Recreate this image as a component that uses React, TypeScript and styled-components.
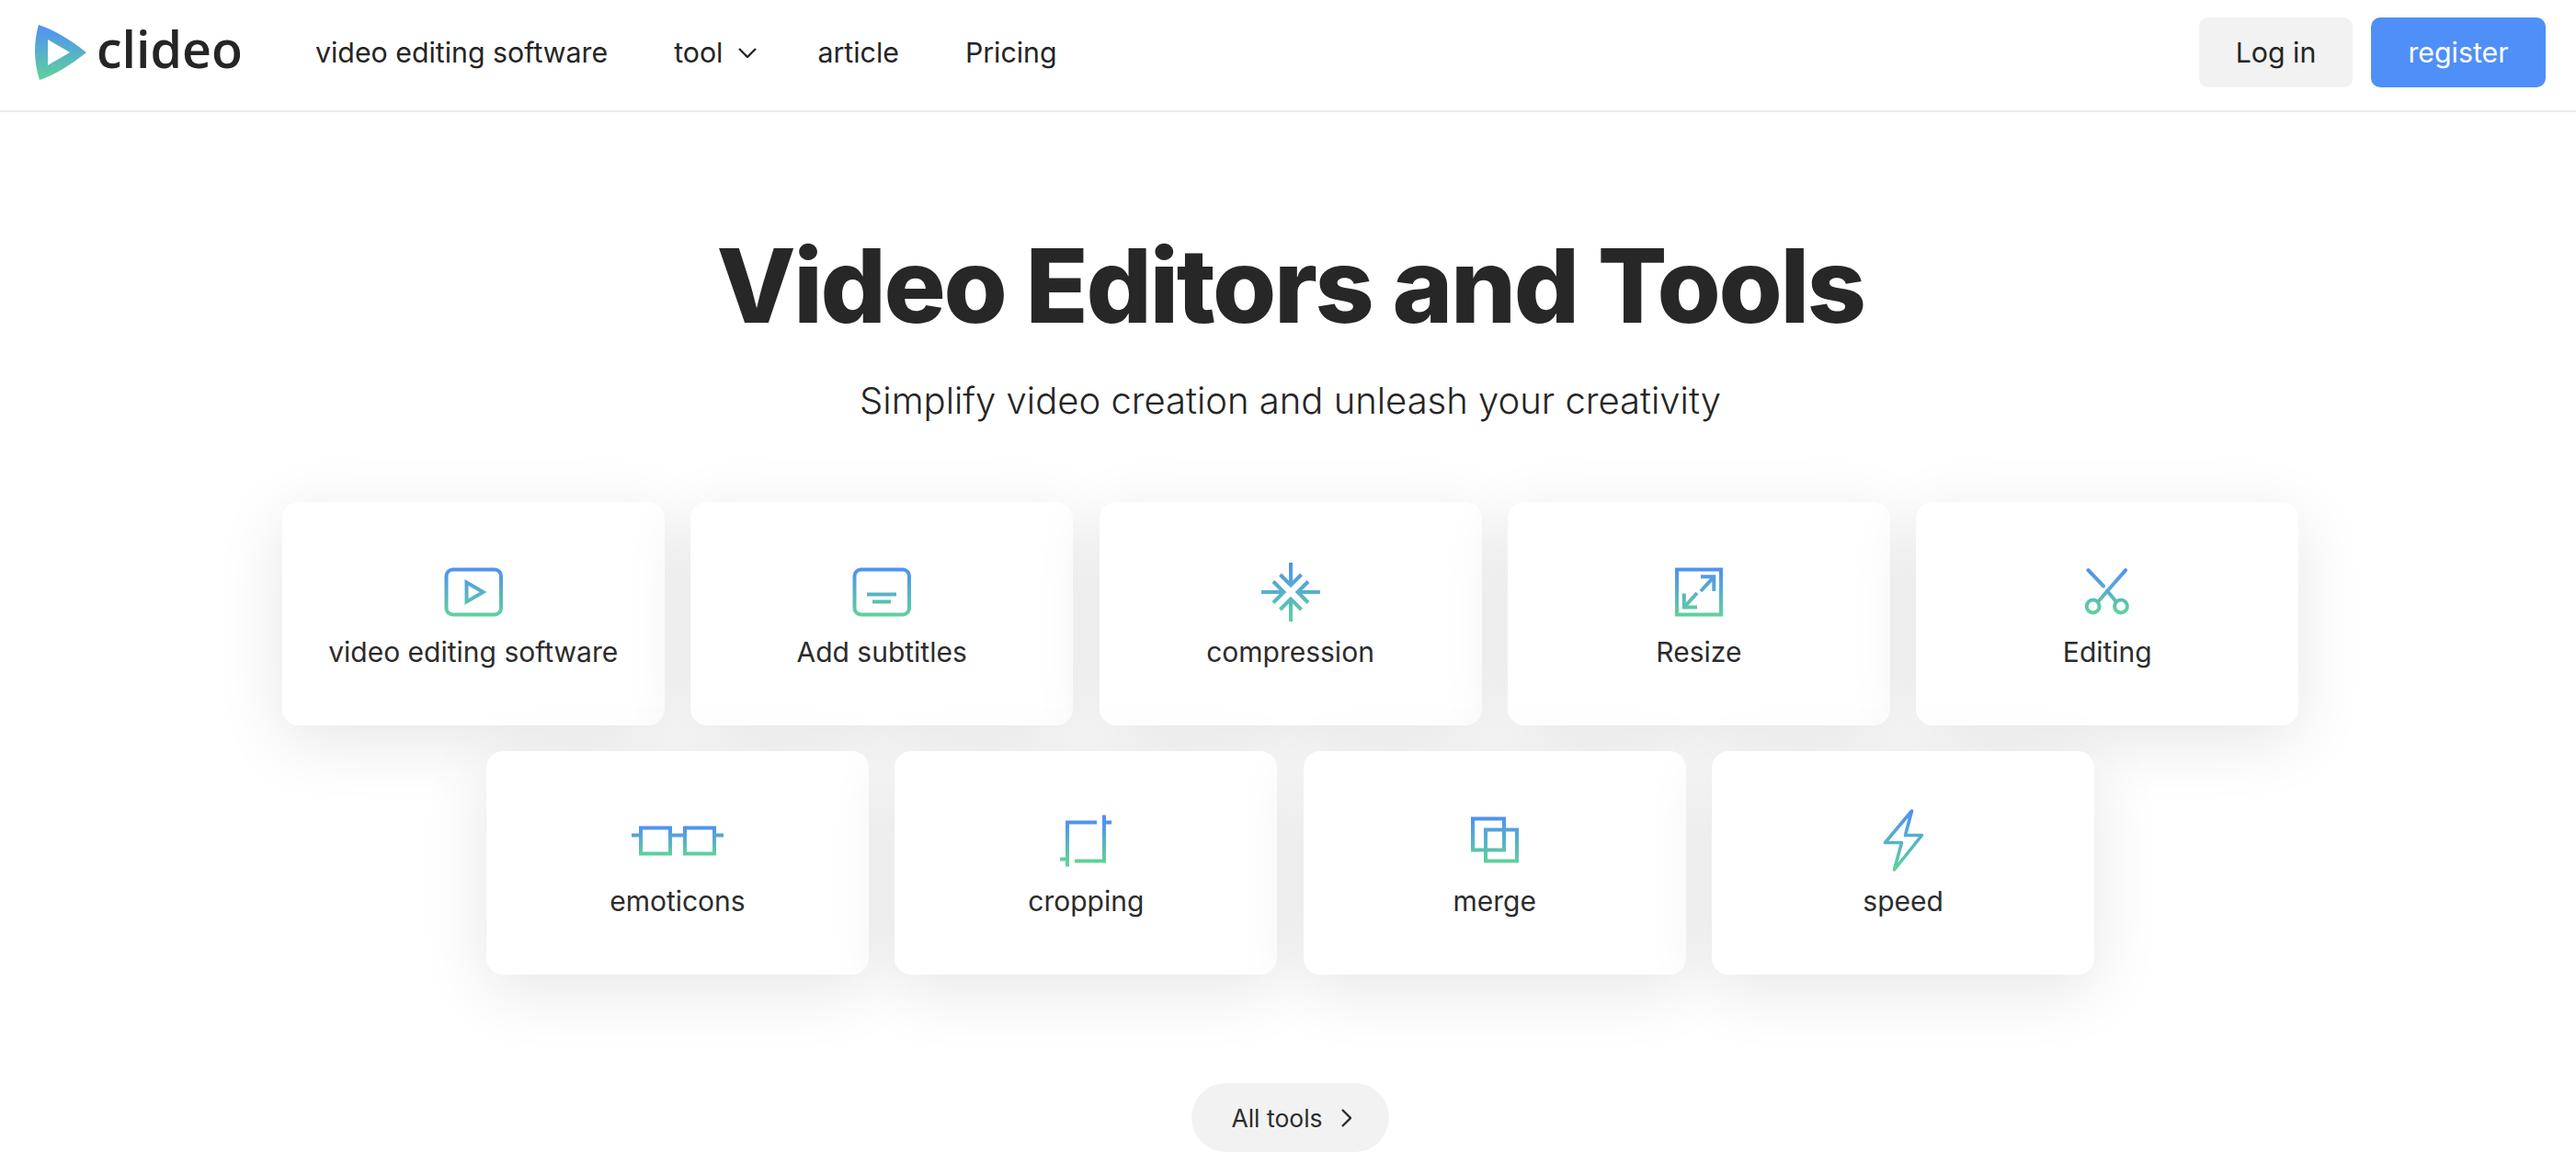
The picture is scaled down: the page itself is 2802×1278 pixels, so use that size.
import React from "react";
import styled, { createGlobalStyle } from "styled-components";

const Global = createGlobalStyle`
  html, body { margin: 0; padding: 0; background: #fff; }
  body { font-family: Inter, "Liberation Sans", sans-serif; color: #252525; overflow: hidden; height: 100vh; }
  * { box-sizing: border-box; }
`;

const Header = styled.header`
  height: 122px;
  border-bottom: 2px solid #ebebeb;
  display: flex;
  align-items: center;
  padding: 0 33px 6px 36px;
`;
const Brand = styled.a`
  display: flex;
  align-items: center;
  gap: 9px;
  width: 307px;
  flex: none;
`;
const BrandName = styled.span`
  font-family: "Open Sans", sans-serif;
  font-weight: 650;
  font-size: 55.5px;
  line-height: 60px;
  letter-spacing: 0;
  color: #252525;
  position: relative;
  top: -4px;
`;
const Nav = styled.nav`
  display: flex;
  align-items: center;
  gap: 72px;
  flex: 1;
`;
const NavLink = styled.a<{ $tight?: boolean }>`
  display: flex;
  align-items: center;
  gap: 17px;
  font-size: 30.3px;
  line-height: 40px;
  color: #252525;
  margin-right: ${(p) => (p.$tight ? "-6px" : "0")};
`;
const Actions = styled.div`
  display: flex;
  gap: 20px;
`;
const HeaderButton = styled.button<{ $primary?: boolean }>`
  height: 76px;
  width: ${(p) => (p.$primary ? "190px" : "167px")};
  border: 0;
  border-radius: 10px;
  background: ${(p) => (p.$primary ? "#4f8ff8" : "#f2f2f2")};
  color: ${(p) => (p.$primary ? "#fff" : "#252525")};
  font-family: inherit;
  font-size: 30.3px;
  font-weight: 400;
`;
const Main = styled.main`
  display: flex;
  flex-direction: column;
  align-items: center;
  padding-left: 5px;
`;
const Title = styled.h1`
  margin: 120px 0 0;
  font-size: 112px;
  line-height: 136px;
  font-weight: 800;
  letter-spacing: -2.4px;
  color: #272727;
`;
const Subtitle = styled.p`
  margin: 28px 0 0;
  font-size: 40px;
  line-height: 60px;
  font-weight: 300;
  color: #252525;
`;
const Grid = styled.div`
  display: flex;
  flex-direction: column;
  gap: 28px;
  margin-top: 80px;
`;
const Row = styled.div`
  display: flex;
  justify-content: center;
  gap: 28.4px;
`;
const Card = styled.a`
  width: 416px;
  height: 243px;
  border-radius: 18px;
  background: #fff;
  box-shadow: 0 16px 72px rgba(0, 0, 0, 0.1);
  display: flex;
  flex-direction: column;
  align-items: center;
  padding-top: 66px;
`;
const IconSvg = styled.svg`
  width: 64px;
  height: 64px;
  overflow: visible;
  flex: none;
`;
const CardLabel = styled.span`
  margin-top: 13px;
  font-size: 30px;
  line-height: 40px;
  color: #2c2c2c;
`;
const AllTools = styled.a`
  margin-top: 118px;
  width: 215px;
  height: 75px;
  border-radius: 38px;
  background: #f2f2f2;
  display: flex;
  align-items: center;
  justify-content: center;
  gap: 20px;
  padding-left: 2px;
  font-size: 26.5px;
  color: #2c2c2c;
`;

function Grad({ id, y1, y2 }: { id: string; y1: number; y2: number }) {
  return (
    <defs>
      <linearGradient id={id} gradientUnits="userSpaceOnUse" x1="0" x2="0" y1={y1} y2={y2}>
        <stop offset="0" stopColor="#4f8ff8" />
        <stop offset="1" stopColor="#60d298" />
      </linearGradient>
    </defs>
  );
}

function Icon({ id, y1, y2, sw = 4, round, children }: { id: string; y1: number; y2: number; sw?: number; round?: boolean; children: React.ReactNode }) {
  return (
    <IconSvg viewBox="0 0 64 64" fill="none" stroke={`url(#${id})`} strokeWidth={sw} strokeLinecap={round ? "round" : "butt"} strokeLinejoin={round ? "round" : "miter"}>
      <Grad id={id} y1={y1} y2={y2} />
      {children}
    </IconSvg>
  );
}

const tools: { label: string; icon: React.ReactNode }[] = [
  {
    label: "video editing software",
    icon: (
      <Icon id="g1" y1={5.5} y2={58.5}>
        <rect x="2.5" y="7.5" width="59.5" height="49" rx="7" />
        <path d="M24.5 21.5L42.5 32L24.5 42.5Z" />
      </Icon>
    ),
  },
  {
    label: "Add subtitles",
    icon: (
      <Icon id="g2" y1={5.5} y2={58.5}>
        <rect x="2.5" y="7.5" width="59.5" height="49" rx="7" />
        <path d="M16 34.5H48M22 42.5H42" />
      </Icon>
    ),
  },
  {
    label: "compression",
    icon: (
      <Icon id="g3" y1={0} y2={64}>
        <path d="M32 0V25M20.5 13L32 24.5L43.5 13" />
        <path d="M32 64V39M20.5 51L32 39.5L43.5 51" />
        <path d="M0 32H25M13 20.5L24.5 32L13 43.5" />
        <path d="M64 32H39M51 20.5L39.5 32L51 43.5" />
      </Icon>
    ),
  },
  {
    label: "Resize",
    icon: (
      <Icon id="g4" y1={5.5} y2={58.5}>
        <rect x="8" y="7.5" width="48" height="49" />
        <path d="M34 15.3H48.3V31M48.3 15.3L34 31" />
        <path d="M30 48.5H15.8V33.5M15.8 48.5L30 33" />
      </Icon>
    ),
  },
  {
    label: "Editing",
    icon: (
      <Icon id="g5" y1={8} y2={55} sw={4} round>
        <path d="M11.5 8.2L28 25.5M52 8.2L23 41.5M32 30.5L41 41.5" />
        <circle cx="16.6" cy="47.5" r="6.9" />
        <circle cx="47" cy="47.5" r="6.9" />
      </Icon>
    ),
  },
  {
    label: "emoticons",
    icon: (
      <Icon id="g6" y1={15.5} y2={47.5}>
        <rect x="-8" y="17.5" width="32" height="28" />
        <rect x="40" y="17.5" width="32" height="28" />
        <path d="M-18 25.5H-10M26 25.5H38M74 25.5H82" />
      </Icon>
    ),
  },
  {
    label: "cropping",
    icon: (
      <Icon id="g7" y1={9.5} y2={53.5}>
        <path d="M12 59.5V11.5H44M52 3.5V53.5H20M52 11.5H60M4 51.5H12" />
      </Icon>
    ),
  },
  {
    label: "merge",
    icon: (
      <Icon id="g8" y1={5.5} y2={55.5}>
        <rect x="8" y="7.5" width="34" height="34" />
        <rect x="22" y="19.5" width="34" height="34" />
      </Icon>
    ),
  },
  {
    label: "speed",
    icon: (
      <Icon id="g9" y1={-2} y2={64} sw={3.6} round>
        <path d="M41.5 -1L12.5 33.5H30.5L22.5 63L52.5 25.5H34.5Z" />
      </Icon>
    ),
  },
];

export default function App() {
  return (
    <>
      <Global />
      <Header>
        <Brand>
          <svg width="60" height="64" viewBox="36 25 60 64">
            <defs>
              <linearGradient id="logo" x1="0" x2="0" y1="0" y2="1">
                <stop offset="0" stopColor="#4f8ff8" />
                <stop offset="1" stopColor="#60d298" />
              </linearGradient>
            </defs>
            <path
              fillRule="evenodd"
              fill="url(#logo)"
              d="M42 27Q65.4 34.6 94 57Q66 79.4 43 87Q33.5 57 42 27ZM52 43V71L76 57Z"
            />
          </svg>
          <BrandName>clideo</BrandName>
        </Brand>
        <Nav>
          <NavLink>video editing software</NavLink>
          <NavLink $tight>
            tool
            <svg width="20" height="11" viewBox="0 0 20 11" fill="none" stroke="#252525" strokeWidth="2.3">
              <path d="M1 1L10 10L19 1" />
            </svg>
          </NavLink>
          <NavLink>article</NavLink>
          <NavLink>Pricing</NavLink>
        </Nav>
        <Actions>
          <HeaderButton>Log in</HeaderButton>
          <HeaderButton $primary>register</HeaderButton>
        </Actions>
      </Header>
      <Main>
        <Title>Video Editors and Tools</Title>
        <Subtitle>Simplify video creation and unleash your creativity</Subtitle>
        <Grid>
          <Row>
            {tools.slice(0, 5).map((t) => (
              <Card key={t.label}>
                {t.icon}
                <CardLabel>{t.label}</CardLabel>
              </Card>
            ))}
          </Row>
          <Row>
            {tools.slice(5).map((t) => (
              <Card key={t.label}>
                {t.icon}
                <CardLabel>{t.label}</CardLabel>
              </Card>
            ))}
          </Row>
        </Grid>
        <AllTools>
          All tools
          <svg width="11" height="20" viewBox="0 0 11 20" fill="none" stroke="#2c2c2c" strokeWidth="2.4">
            <path d="M1 1L10 10L1 19" />
          </svg>
        </AllTools>
      </Main>
    </>
  );
}
